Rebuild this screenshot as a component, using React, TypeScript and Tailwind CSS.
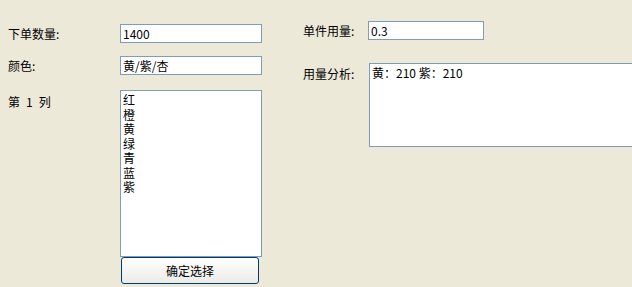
import React from "react";

const font = { fontFamily: '"Noto Sans CJK SC", "Liberation Sans", sans-serif' };

export default function App() {
  const colors = ["红", "橙", "黄", "绿", "青", "蓝", "紫"];
  return (
    <div
      className="w-[632px] h-[287px] bg-[#ece9d8] overflow-hidden flex text-[12px] leading-[14px] text-black"
      style={font}
    >
      <div className="w-[303px] shrink-0 flex flex-col">
        <div className="mt-[24px] flex items-center h-[19px]">
          <div className="w-[120px] pl-[8px]">下单数量:</div>
          <div className="w-[142px] h-[19px] border border-[#7f9db9] bg-white flex items-center pl-[2px]">1400</div>
        </div>
        <div className="mt-[13px] flex items-center h-[19px]">
          <div className="w-[120px] pl-[8px]">颜色:</div>
          <div className="w-[142px] h-[19px] border border-[#7f9db9] bg-white flex items-center pl-[2px]">黄/紫/杏</div>
        </div>
        <div className="mt-[15px] flex">
          <div className="w-[120px] pl-[8px] pt-[5px] flex">
            <span>第</span>
            <span className="mx-[6px]">1</span>
            <span>列</span>
          </div>
          <div className="flex flex-col">
            <div className="w-[142px] h-[167px] border border-[#7f9db9] bg-white pl-[2px] pt-[2px] whitespace-pre-line leading-[14.5px]">
              {colors.join("\n")}
            </div>
            <div className="ml-[1px] w-[138px] h-[27px] border border-[#003c74] rounded-[3px] bg-gradient-to-b from-[#ffffff] to-[#ecebe6] flex items-center justify-center">
              确定选择
            </div>
          </div>
        </div>
      </div>
      <div className="flex-1 flex flex-col">
        <div className="mt-[21px] flex items-center h-[19px]">
          <div className="w-[65px]">单件用量:</div>
          <div className="w-[116px] h-[19px] border border-[#7f9db9] bg-white flex items-center pl-[2px]">0.3</div>
        </div>
        <div className="mt-[23px] flex">
          <div className="w-[66px] pt-[4px]">用量分析:</div>
          <div className="w-[290px] h-[84px] shrink-0 border border-[#7f9db9] bg-white pl-[2px] pt-[2px]">黄：210 紫：210</div>
        </div>
      </div>
    </div>
  );
}
